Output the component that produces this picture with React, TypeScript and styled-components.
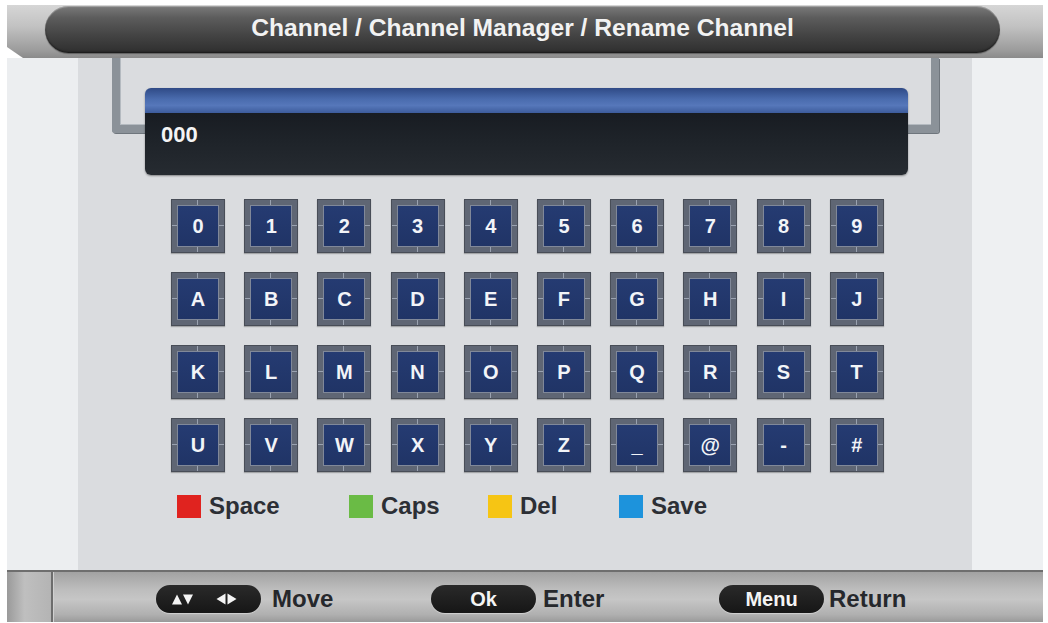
import React from "react";
import styled, { createGlobalStyle } from "styled-components";

const Global = createGlobalStyle`
  html, body { margin: 0; padding: 0; background: #ffffff; }
  body { font-family: "Liberation Sans", Arial, sans-serif; }
  * { box-sizing: border-box; }
`;

const Screen = styled.div`
  width: 1036px;
  margin: 5px 0 0 7px;
  display: flex;
  flex-direction: column;
`;

const Header = styled.div`
  height: 53px;
  background: linear-gradient(to bottom, #d6d6d6 0%, #c2c2c2 40%, #9c9c9c 85%, #8a8a8a 100%);
  clip-path: polygon(0 0, 100% 0, 100% 100%, 16px 100%, 0 calc(100% - 11px));
  display: flex;
  align-items: flex-start;
`;

const TitlePill = styled.div`
  flex: 1;
  margin: 1px 43px 0 38px;
  height: 47px;
  border-radius: 24px;
  background: linear-gradient(to bottom, #7a7a7a 0%, #5c5c5c 25%, #454545 60%, #2e2e2e 100%);
  box-shadow: inset 0 1px 1px rgba(255,255,255,0.35), inset 0 -1px 2px rgba(0,0,0,0.5), 0 1px 1px rgba(0,0,0,0.35);
  display: flex;
  align-items: center;
  justify-content: center;
  color: #f2f2f2;
  font-weight: bold;
  font-size: 24.6px;
  padding-bottom: 3px;
`;

const Body = styled.div`
  height: 512px;
  display: grid;
  grid-template-columns: 71px 894px 71px;
`;

const SideStrip = styled.div<{ $tone: string }>`
  background: ${(p) => p.$tone};
`;

const Main = styled.div`
  position: relative;
  background: #dadcdf;
  padding-top: 30px;
  display: flex;
  flex-direction: column;
`;

const Bracket = styled.div`
  position: absolute;
  left: 34px;
  right: 33px;
  top: 0;
  height: 75px;
  border: 8px solid #8b9299;
  border-top: none;
  border-radius: 0 0 3px 3px;
  box-shadow: inset 1px -1px 0 #b4bac0, 1px 1px 0 #6f767d;
`;

const InputBox = styled.div`
  position: relative;
  margin: 0 64px 0 67px;
  height: 87px;
  border-radius: 6px;
  overflow: hidden;
  display: flex;
  flex-direction: column;
  box-shadow: 0 1px 2px rgba(0,0,0,0.4);
`;

const InputBar = styled.div`
  height: 25px;
  background: linear-gradient(to bottom, #2f4a86 0%, #4a6cae 45%, #5677ba 70%, #3d5c9c 100%);
`;

const InputField = styled.div`
  flex: 1;
  background: linear-gradient(to bottom, #181c22 0%, #1f242a 50%, #262b31 100%);
  color: #f4f4f4;
  font-weight: bold;
  font-size: 22px;
  padding: 9px 0 0 16px;
`;

const Keyboard = styled.div`
  margin: 24px 0 0 93px;
  display: grid;
  grid-template-columns: repeat(10, 54px);
  column-gap: 19.2px;
  row-gap: 19px;
`;

const Key = styled.div`
  width: 54px;
  height: 54px;
  padding: 5px;
  border: 1px solid #484d57;
  background:
    linear-gradient(to right, transparent calc(50% - 1px), #9aa2b0 calc(50% - 1px), #9aa2b0 calc(50% + 0px), transparent calc(50% + 0px)),
    linear-gradient(to bottom, transparent calc(50% - 1px), #9aa2b0 calc(50% - 1px), #9aa2b0 calc(50% + 0px), transparent calc(50% + 0px)),
    #5f6674;
  box-shadow: 0 1px 1px rgba(0,0,0,0.25);
  display: flex;
`;

const KeyFace = styled.div`
  flex: 1;
  background: linear-gradient(to bottom, #253b72 0%, #203466 100%);
  border: 1px solid #808899;
  display: flex;
  align-items: center;
  justify-content: center;
  color: #f2f4f8;
  font-weight: bold;
  font-size: 20px;
`;

const Legend = styled.div`
  margin: 20px 0 0 99px;
  display: grid;
  grid-template-columns: 172px 139px 131px auto;
`;

const LegendItem = styled.div`
  display: flex;
  align-items: center;
  gap: 8px;
  color: #2c2f35;
  font-weight: bold;
  font-size: 24px;
`;

const Swatch = styled.span<{ $color: string }>`
  width: 24px;
  height: 23px;
  background: ${(p) => p.$color};
  display: inline-block;
`;

const Footer = styled.div`
  height: 52px;
  border-top: 2px solid #6e6e6e;
  background: linear-gradient(to bottom, #a2a2a2 0%, #bdbdbd 35%, #c6c6c6 55%, #b0b0b0 85%, #9a9a9a 100%);
  display: flex;
  align-items: stretch;
`;

const FooterCap = styled.div`
  width: 46px;
  border-right: 2px solid #6d6d6d;
  box-shadow: 1px 0 0 #d0d0d0;
  background: linear-gradient(to right, #9a9a9a 0%, #bfbfbf 40%, #b4b4b4 100%);
`;

const FooterHints = styled.div`
  flex: 1;
  padding: 13px 0 0 103px;
  display: grid;
  grid-template-columns: 275px 288px auto;
  align-items: start;
`;

const Hint = styled.div<{ $gap: number }>`
  display: flex;
  align-items: center;
  gap: ${(p) => p.$gap}px;
  color: #26282c;
  font-weight: bold;
  font-size: 24px;
`;

const KeyPill = styled.span<{ $shift?: number }>`
  width: 105px;
  height: 28px;
  border-radius: 14px;
  background: linear-gradient(to bottom, #2a2a2a 0%, #161616 100%);
  box-shadow: 0 1px 1px rgba(255,255,255,0.4);
  color: #f4f4f4;
  font-size: 20px;
  font-weight: bold;
  display: flex;
  align-items: center;
  justify-content: center;
  gap: 23px;
  padding-right: ${(p) => p.$shift ?? 0}px;
`;

const ArrowPair = styled.svg`
  display: block;
`;

const keys = [
  "0","1","2","3","4","5","6","7","8","9",
  "A","B","C","D","E","F","G","H","I","J",
  "K","L","M","N","O","P","Q","R","S","T",
  "U","V","W","X","Y","Z","_","@","-","#",
];

const legend = [
  { color: "#e0231f", label: "Space" },
  { color: "#6abb45", label: "Caps" },
  { color: "#f6c514", label: "Del" },
  { color: "#1d93dc", label: "Save" },
];

export default function App() {
  return (
    <>
      <Global />
      <Screen>
        <Header>
          <TitlePill>Channel / Channel Manager / Rename Channel</TitlePill>
        </Header>
        <Body>
          <SideStrip $tone="#eceef0" />
          <Main>
            <Bracket />
            <InputBox>
              <InputBar />
              <InputField>000</InputField>
            </InputBox>
            <Keyboard>
              {keys.map((k) => (
                <Key key={k}>
                  <KeyFace>{k}</KeyFace>
                </Key>
              ))}
            </Keyboard>
            <Legend>
              {legend.map((l) => (
                <LegendItem key={l.label}>
                  <Swatch $color={l.color} />
                  {l.label}
                </LegendItem>
              ))}
            </Legend>
          </Main>
          <SideStrip $tone="#eef0f2" />
        </Body>
        <Footer>
          <FooterCap />
          <FooterHints>
            <Hint $gap={11}>
              <KeyPill $shift={8}>
                <ArrowPair width="21" height="11" viewBox="0 0 21 11">
                  <polygon points="0,10.5 5,0.5 10,10.5" fill="#f4f4f4" />
                  <polygon points="11,0.5 21,0.5 16,10.5" fill="#f4f4f4" />
                </ArrowPair>
                <ArrowPair width="21" height="12" viewBox="0 0 21 12">
                  <polygon points="9.5,0.5 9.5,11.5 0.5,6" fill="#f4f4f4" />
                  <polygon points="11.5,0.5 11.5,11.5 20.5,6" fill="#f4f4f4" />
                </ArrowPair>
              </KeyPill>
              Move
            </Hint>
            <Hint $gap={7}>
              <KeyPill>Ok</KeyPill>
              Enter
            </Hint>
            <Hint $gap={5}>
              <KeyPill>Menu</KeyPill>
              Return
            </Hint>
          </FooterHints>
        </Footer>
      </Screen>
    </>
  );
}
